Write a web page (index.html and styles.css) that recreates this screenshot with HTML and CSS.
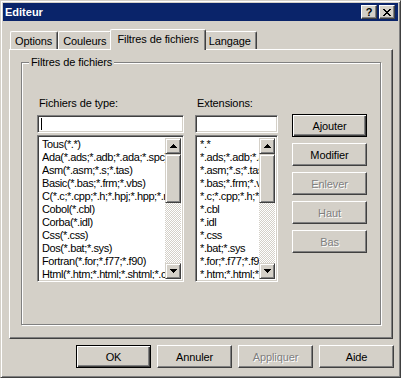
FILE: index.html
```html
<!DOCTYPE html>
<html lang="fr">
<head>
    <meta charset="UTF-8">
    <title>Editeur</title>
    <link rel="stylesheet" href="styles.css">
</head>
<body>
    <div class="window">
        <div class="titlebar">
            <span class="title">Editeur</span>
            <div class="caption-buttons">
                <div class="cap">?</div>
                <div class="cap">
                    <svg width="8" height="7" viewBox="0 0 8 7" shape-rendering="crispEdges">
                        <path d="M0 0h2v1h1v1h2V1h1V0h2v1H7v1H6v1H5v1h1v1h1v1h1v1H6V6H5V5H3v1H2v1H0V6h1V5h1V4h1V3H2V2H1V1H0z" fill="#000"/>
                    </svg>
                </div>
            </div>
        </div>

        <div class="tabs">
            <div class="tab-row">
                <div class="tab">Options</div>
                <div class="tab">Couleurs</div>
                <div class="tab active">Filtres de fichiers</div>
                <div class="tab">Langage</div>
            </div>
            <div class="panel">
                <fieldset class="group">
                    <legend>Filtres de fichiers</legend>
                    <div class="group-body">
                        <div class="column type-column">
                            <div class="label">Fichiers de type:</div>
                            <div class="edit"><span class="caret"></span></div>
                            <div class="listbox">
                                <ul class="items">
                                    <li>Tous(*.*)</li>
                                    <li>Ada(*.ads;*.adb;*.ada;*.spc)</li>
                                    <li>Asm(*.asm;*.s;*.tas)</li>
                                    <li>Basic(*.bas;*.frm;*.vbs)</li>
                                    <li>C(*.c;*.cpp;*.h;*.hpj;*.hpp;*.rc)</li>
                                    <li>Cobol(*.cbl)</li>
                                    <li>Corba(*.idl)</li>
                                    <li>Css(*.css)</li>
                                    <li>Dos(*.bat;*.sys)</li>
                                    <li>Fortran(*.for;*.f77;*.f90)</li>
                                    <li>Html(*.htm;*.html;*.shtml;*.css)</li>
                                </ul>
                                <div class="scrollbar">
                                    <div class="arrow">
                                        <svg width="7" height="4" viewBox="0 0 7 4" shape-rendering="crispEdges"><path d="M3 0h1v1h1v1h1v1h1v1H0V3h1V2h1V1h1z"/></svg>
                                    </div>
                                    <div class="thumb"></div>
                                    <div class="track"></div>
                                    <div class="arrow">
                                        <svg width="7" height="4" viewBox="0 0 7 4" shape-rendering="crispEdges"><path d="M0 0h7v1H6v1H5v1H4v1H3V3H2V2H1V1H0z"/></svg>
                                    </div>
                                </div>
                            </div>
                        </div>

                        <div class="column ext-column">
                            <div class="label">Extensions:</div>
                            <div class="edit"></div>
                            <div class="listbox">
                                <ul class="items">
                                    <li>*.*</li>
                                    <li>*.ads;*.adb;*.ada;*.spc</li>
                                    <li>*.asm;*.s;*.tas</li>
                                    <li>*.bas;*.frm;*.vbs</li>
                                    <li>*.c;*.cpp;*.h;*.hpj;*.hpp;*.rc</li>
                                    <li>*.cbl</li>
                                    <li>*.idl</li>
                                    <li>*.css</li>
                                    <li>*.bat;*.sys</li>
                                    <li>*.for;*.f77;*.f90</li>
                                    <li>*.htm;*.html;*.shtml;*.css</li>
                                </ul>
                                <div class="scrollbar">
                                    <div class="arrow">
                                        <svg width="7" height="4" viewBox="0 0 7 4" shape-rendering="crispEdges"><path d="M3 0h1v1h1v1h1v1h1v1H0V3h1V2h1V1h1z"/></svg>
                                    </div>
                                    <div class="thumb"></div>
                                    <div class="track"></div>
                                    <div class="arrow">
                                        <svg width="7" height="4" viewBox="0 0 7 4" shape-rendering="crispEdges"><path d="M0 0h7v1H6v1H5v1H4v1H3V3H2V2H1V1H0z"/></svg>
                                    </div>
                                </div>
                            </div>
                        </div>

                        <div class="side-buttons">
                            <div class="btn default">Ajouter</div>
                            <div class="btn">Modifier</div>
                            <div class="btn disabled">Enlever</div>
                            <div class="btn disabled">Haut</div>
                            <div class="btn disabled">Bas</div>
                        </div>
                    </div>
                </fieldset>
            </div>
        </div>

        <div class="footer">
            <div class="btn default">OK</div>
            <div class="btn">Annuler</div>
            <div class="btn disabled">Appliquer</div>
            <div class="btn">Aide</div>
        </div>
    </div>
</body>
</html>
```

FILE: styles.css
```css
* {
    box-sizing: border-box;
}

body {
    margin: 0;
    background-color: #d4d0c8;
    font-family: 'Liberation Sans', Arial, sans-serif;
    font-size: 11px;
    letter-spacing: -0.1px;
    color: #000;
}

.window {
    width: 401px;
    height: 378px;
    padding: 2px;
    display: flex;
    flex-direction: column;
    background-color: #d4d0c8;
    border: 1px solid;
    border-color: #d4d0c8 #404040 #404040 #d4d0c8;
    box-shadow: inset 1px 1px #fff, inset -1px -1px #808080;
}

/* title bar */
.titlebar {
    height: 18px;
    padding: 0 3px 0 2px;
    display: flex;
    align-items: center;
    justify-content: space-between;
    background-color: #0a246a;
    color: #fff;
    font-weight: bold;
    letter-spacing: 0;
}

.caption-buttons {
    display: flex;
    gap: 2px;
}

.cap {
    width: 16px;
    height: 14px;
    display: flex;
    align-items: center;
    justify-content: center;
    background-color: #d4d0c8;
    color: #000;
    font-size: 11px;
    font-weight: bold;
    line-height: 12px;
    border: 1px solid;
    border-color: #fff #404040 #404040 #fff;
    box-shadow: inset -1px -1px #808080;
}

/* tabs */
.tabs {
    margin: 8px 5px 0 6px;
}

.tab-row {
    height: 20px;
    padding-left: 1px;
    display: flex;
    align-items: flex-end;
}

.tab {
    height: 18px;
    padding: 0 5px 0 4px;
    display: flex;
    align-items: center;
    background-color: #d4d0c8;
    border-top: 1px solid #fff;
    border-left: 1px solid #fff;
    border-right: 1px solid #404040;
    border-radius: 2px 2px 0 0;
    box-shadow: inset -1px 0 #808080;
}

.tab.active {
    position: relative;
    z-index: 1;
    height: 21px;
    margin: 0 -2px -1px -2px;
    padding: 0 6px 2px 6px;
}

.panel {
    height: 290px;
    padding-top: 6px;
    border: 1px solid;
    border-color: #fff #404040 #404040 #fff;
    box-shadow: inset -1px -1px #808080;
}

/* group box */
.group {
    height: 269px;
    margin: 0 11px;
    padding: 0;
    border: 1px solid #808080;
    box-shadow: inset 1px 1px #fff, 1px 1px #fff;
}

.group legend {
    margin-left: 7px;
    padding: 0 2px;
    line-height: 13px;
    background-color: #d4d0c8;
}

.group-body {
    padding: 28px 0 0 15px;
    display: flex;
    align-items: flex-start;
}

.column {
    display: flex;
    flex-direction: column;
}

.type-column {
    width: 147px;
}

.ext-column {
    width: 83px;
    margin-left: 11px;
}

.label {
    height: 13px;
    line-height: 13px;
    padding-left: 2px;
    margin-bottom: 5px;
}

.edit,
.listbox {
    background-color: #fff;
    border: 1px solid;
    border-color: #808080 #fff #fff #808080;
    box-shadow: inset 1px 1px #404040, inset -1px -1px #d4d0c8;
}

.edit {
    height: 18px;
    padding: 2px 0 0 3px;
}

.caret {
    display: block;
    width: 1px;
    height: 12px;
    background-color: #000;
}

.listbox {
    height: 147px;
    margin-top: 2px;
    padding: 2px;
    display: flex;
}

.items {
    flex: 1;
    min-width: 0;
    margin: 0;
    padding: 0 0 0 2px;
    list-style: none;
    overflow: hidden;
    letter-spacing: -0.4px;
}

.items li {
    height: 13px;
    line-height: 13px;
    white-space: nowrap;
    overflow: hidden;
}

.scrollbar {
    width: 16px;
    display: flex;
    flex-direction: column;
}

.arrow,
.thumb {
    background-color: #d4d0c8;
    border: 1px solid;
    border-color: #d4d0c8 #404040 #404040 #d4d0c8;
    box-shadow: inset 1px 1px #fff, inset -1px -1px #808080;
}

.arrow {
    height: 16px;
    display: flex;
    align-items: center;
    justify-content: center;
}

.thumb {
    height: 49px;
}

.track {
    flex: 1;
    background: repeating-conic-gradient(#d4d0c8 0 25%, #fff 0 50%) 0 0 / 2px 2px;
}

/* buttons */
.side-buttons {
    margin: 17px 0 0 14px;
    display: flex;
    flex-direction: column;
    gap: 6px;
}

.btn {
    width: 75px;
    height: 23px;
    display: flex;
    align-items: center;
    justify-content: center;
    font-weight: normal;
    background-color: #d4d0c8;
    border: 1px solid;
    border-color: #fff #404040 #404040 #fff;
    box-shadow: inset -1px -1px #808080;
}

.btn.default {
    border-color: #000;
    box-shadow: inset 1px 1px #fff, inset -1px -1px #404040, inset -2px -2px #808080;
}

.btn.disabled {
    color: #808080;
    text-shadow: 1px 1px #fff;
}

.footer {
    margin-top: 6px;
    padding-right: 4px;
    display: flex;
    justify-content: flex-end;
    gap: 6px;
}
```
